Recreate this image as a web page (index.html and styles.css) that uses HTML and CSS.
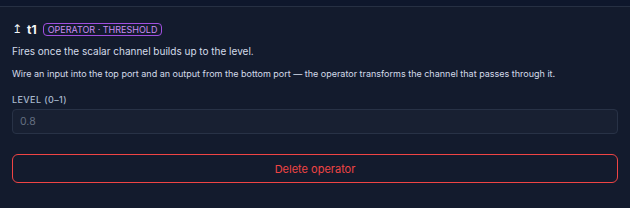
FILE: index.html
```html
<!DOCTYPE html>
<html lang="en">
<head>
    <meta charset="UTF-8">
    <meta name="viewport" content="width=device-width, initial-scale=1.0">
    <title>Operator</title>
    <link rel="stylesheet" href="styles.css">
</head>
<body>
    <div class="topbar"></div>
    <div class="panel">
        <div class="title-row">
            <span class="icon">↥</span>
            <span class="name">t1</span>
            <span class="badge">Operator · Threshold</span>
        </div>
        <p class="summary">Fires once the scalar channel builds up to the level.</p>
        <p class="hint">Wire an input into the top port and an output from the bottom port — the operator transforms the channel that passes through it.</p>
        <label class="field-label" for="level">Level (0–1)</label>
        <input class="field" id="level" type="text" placeholder="0.8">
        <button class="delete">Delete operator</button>
    </div>
</body>
</html>
```

FILE: styles.css
```css
body {
    margin: 0;
    padding: 0;
    font-family: Inter, 'Noto Sans', sans-serif;
    background-color: #131b2d;
    color: #e2e8f0;
}

.topbar {
    height: 6px;
    background-color: #0e172c;
    border-bottom: 1px solid #263043;
}

.panel {
    padding: 14px 12px 12px;
}

.title-row {
    display: flex;
    align-items: center;
    height: 16px;
}

.icon {
    font-size: 12px;
    color: #f1f5f9;
    font-family: 'DejaVu Sans', sans-serif;
    margin-right: 5px;
}

.name {
    font-size: 12px;
    font-weight: 700;
    color: #f8fafc;
    margin-right: 6px;
}

.badge {
    font-size: 9px;
    text-transform: uppercase;
    color: #c98cf2;
    border: 1px solid #a14fe0;
    border-radius: 4px;
    padding: 0 4px;
    line-height: 11px;
}

.summary {
    margin: 6px 0 0;
    font-size: 10px;
    line-height: 16px;
    color: #d3dcea;
}

.hint {
    margin: 8px 0 0;
    font-size: 9px;
    line-height: 14px;
    color: #d3dcea;
}

.field-label {
    display: block;
    margin-top: 13px;
    font-size: 9px;
    font-weight: 500;
    letter-spacing: 0.4px;
    text-transform: uppercase;
    color: #a9b9ce;
}

.field {
    display: block;
    box-sizing: border-box;
    width: 100%;
    height: 25px;
    margin-top: 4px;
    padding: 0 7px;
    font-family: inherit;
    font-size: 10.5px;
    color: #e2e8f0;
    background-color: #182032;
    border: 1px solid #283246;
    border-radius: 4px;
}

.field::placeholder {
    color: #646f80;
}

.delete {
    display: block;
    box-sizing: border-box;
    width: 100%;
    height: 29px;
    margin-top: 20px;
    font-family: inherit;
    font-size: 11px;
    color: #ef4444;
    background: transparent;
    border: 1px solid #ef4444;
    border-radius: 6px;
    cursor: pointer;
}
```
